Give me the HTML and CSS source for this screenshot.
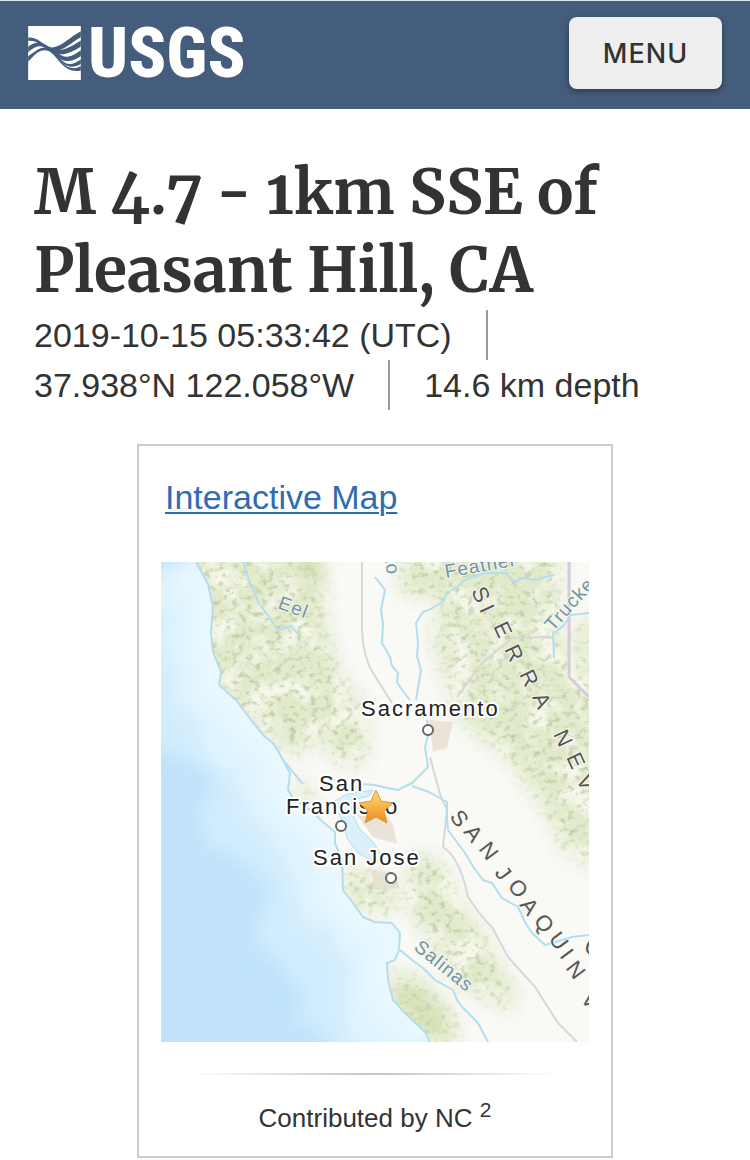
FILE: index.html
```html
<!DOCTYPE html>
<html lang="en">
<head>
<meta charset="utf-8">
<meta name="viewport" content="width=device-width, initial-scale=1">
<title>M 4.7 - 1km SSE of Pleasant Hill, CA</title>
<link rel="stylesheet" href="styles.css">
</head>
<body>
<header class="site-header">
  <a class="logo" href="#" aria-label="USGS home">
    <svg class="logo-mark" viewBox="6 5 159 163" aria-hidden="true">
      <path fill="#fff" d="M6 5H165V168H6z"/>
      <g class="logo-waves">
        <path d="M6 40C32 38 48 58 68 67C96 80 128 40 165 21V39C134 55 105 90 72 77C48 68 34 47 6 50z"/>
        <path d="M6 68C28 49 47 55 67 68C98 88 126 74 165 49V67C130 90 99 101 67 77C45 61 31 63 6 84z"/>
        <path d="M6 96C28 81 41 67 63 70C88 75 101 99 124 98C140 96 151 88 165 78V96C142 109 124 118 101 103C79 86 64 74 45 80C30 86 20 98 6 113z"/>
        <path d="M62 70C89 80 105 119 131 120C143 120 153 114 165 106V120C143 132 127 131 108 115C92 101 82 85 62 75z"/>
        <path d="M70 76C94 91 111 131 141 132C151 133 158 130 165 126V139C143 144 124 138 107 120C94 106 84 91 70 80z"/>
      </g>
    </svg>
    <span class="logo-name">USGS</span>
  </a>
  <button class="menu-button" type="button">MENU</button>
</header>

<main class="event">
  <h1 class="event-title">M 4.7 - 1km SSE of Pleasant Hill, CA</h1>
  <ul class="event-details">
    <li>2019-10-15 05:33:42 (UTC)</li>
    <li>37.938°N 122.058°W</li>
    <li>14.6 km depth</li>
  </ul>

  <section class="card">
    <h2 class="card-title"><a href="#">Interactive Map</a></h2>
    <svg class="map" viewBox="0 0 428 480" role="img" aria-label="Map of the epicenter east of San Francisco">
      <defs>
        <filter id="soft" x="-30%" y="-30%" width="160%" height="160%"><feGaussianBlur stdDeviation="9"/></filter>
        <filter id="shelf" x="-30%" y="-30%" width="160%" height="160%">
          <feTurbulence type="fractalNoise" baseFrequency="0.02" numOctaves="3" seed="4" result="n"/>
          <feDisplacementMap in="SourceGraphic" in2="n" scale="50" xChannelSelector="R" yChannelSelector="G"/>
          <feGaussianBlur stdDeviation="9"/>
        </filter>
        <filter id="hills" x="-5%" y="-5%" width="110%" height="110%" color-interpolation-filters="sRGB">
          <feGaussianBlur in="SourceGraphic" stdDeviation="8" result="area"/>
          <feTurbulence type="fractalNoise" baseFrequency="0.14 0.18" numOctaves="4" seed="9"/>
          <feColorMatrix values="0 0 0 0 0.66  0 0 0 0 0.70  0 0 0 0 0.52  4 0 0 0 -2.1" result="dots"/>
          <feComposite in="dots" in2="area" operator="in"/>
        </filter>
        <filter id="patches" x="-5%" y="-5%" width="110%" height="110%" color-interpolation-filters="sRGB">
          <feGaussianBlur in="SourceGraphic" stdDeviation="8" result="area"/>
          <feTurbulence type="fractalNoise" baseFrequency="0.035" numOctaves="4" seed="21"/>
          <feColorMatrix values="0 0 0 0 0.98  0 0 0 0 0.98  0 0 0 0 0.95  0 4 0 0 -1.8" result="gaps"/>
          <feComposite in="gaps" in2="area" operator="in"/>
        </filter>
        <linearGradient id="star" x1="0" y1="0" x2="0" y2="1">
          <stop offset="0" stop-color="#ffdc78"/><stop offset="1" stop-color="#f08a18"/>
        </linearGradient>
        <path id="coast" d="M35 0L47 22L52 45L50 70L52 90L60 110L58 123L75 138L90 158L103 174L113 182L122 198L129 211L127 228L132 236L149 248L162 260L174 270L174 281L181 298L182 328L192 341L202 355L214 360L231 361L239 371L238 388L234 398L226 401L227 418L232 438L244 451L264 470L269 480"/>
        <path id="land" d="M35 0L47 22L52 45L50 70L52 90L60 110L58 123L75 138L90 158L103 174L113 182L122 198L129 211L127 228L132 236L149 248L162 260L174 270L174 281L181 298L182 328L192 341L202 355L214 360L231 361L239 371L238 388L234 398L226 401L227 418L232 438L244 451L264 470L269 480H428V0z"/>
        <clipPath id="land-clip"><use href="#land"/></clipPath>
        <g id="green-areas">
          <path d="M30 -10H160L164 60L178 110L206 150L205 200L180 205L150 165L145 195L110 180L90 160L45 110z"/>
          <path d="M238 -10H400L396 70L440 150V310L405 290L378 240L350 200L300 160L285 120L270 70L285 40L240 30z"/>
          <path d="M128 215L160 238L150 246L130 232z"/>
          <path d="M182 305L222 312L240 350L200 352L183 330z"/>
          <path d="M255 290L280 300L292 330L320 370L355 430L350 450L300 425L262 370L240 330z"/>
          <path d="M228 405L262 420L290 450L300 480H268L232 440z"/>
          <path d="M414 60H440V170L410 160L425 130z"/>
        </g>
      </defs>

      <path fill="#c0e3fb" d="M0 0H428V480H0z"/>
      <g class="line">
        <use href="#coast" stroke="#d2edfd" stroke-width="170" filter="url(#shelf)"/>
        <use href="#coast" stroke="#e0f4fe" stroke-width="100" filter="url(#shelf)"/>
        <use href="#coast" stroke="#eaf8fe" stroke-width="40" filter="url(#soft)"/>
      </g>
      <use href="#land" fill="#f9f9f6"/>
      <g clip-path="url(#land-clip)">
        <use href="#green-areas" fill="#e1ebcb" filter="url(#soft)"/>
        <use href="#green-areas" filter="url(#patches)" opacity=".8"/>
        <use href="#green-areas" filter="url(#hills)" opacity=".5"/>
        <path fill="#cbd8a4" opacity=".6" filter="url(#soft)" d="M232 412L258 424L286 462L284 480L262 474L236 440zM120 -10H158L160 30L140 20z"/>
        <path fill="#e2dccb" d="M268 158L292 160L286 186L272 190zM210 308L236 312L238 326L214 328zM188 242L214 240L232 262L236 282L212 275z" opacity=".7"/>
      </g>
      <use href="#coast" class="line" stroke="#b4dcee" stroke-width="2"/>
      <path class="water" d="M172 240L186 232L200 230L212 228L208 234L192 238L190 248L198 266L212 280L222 296L212 300L196 290L186 276L182 260z"/>

      <g class="line road">
        <path d="M201 0V68Q202 95 212 111L231 141M269 195L279 232L286 248L282 285Q299 296 307 335Q320 355 331 365L347 395L374 425L397 461L416 480"/>
        <path d="M296 135L321 101L351 76L391 75"/>
      </g>
      <path class="line border" d="M408 0V115L428 135"/>
      <g class="line river">
        <path d="M82 0L88 18L97 40L108 55L117 68L130 64L138 73"/>
        <path d="M214 15L224 28L222 38L220 48L222 62L221 81L229 95L231 104L237 111L236 120L241 128L249 138"/>
        <path d="M394 13L384 15L374 18L362 16L354 20L344 11L324 11L304 18L296 25L287 30L281 40L270 47L262 50L255 61L257 81L256 94L260 108L255 138"/>
        <path d="M266 158L268 170L264 185L267 205L260 212L251 221L237 228L226 226L214 223L200 222L186 230M251 224L268 230L286 240V256L287 268L304 291L313 306L322 318L331 321L341 336L357 345L364 360L371 371L384 383L411 375L428 373"/>
        <path d="M239 388L251 398L262 406L274 418L292 428L296 438L301 445L317 461L327 480"/>
        <path d="M428 51L410 53L402 64L392 72L393 96M122 198L142 222"/>
      </g>

      <g class="river-name">
        <text transform="translate(116 46) rotate(20)">Eel</text>
        <text transform="translate(252 387) rotate(39)">Salinas</text>
        <text transform="translate(392 70) rotate(-48)">Trucke</text>
        <text transform="translate(285 16) rotate(-10)">Feather</text>
        <text transform="translate(224 -4) rotate(82)">to</text>
      </g>
      <g class="region-name">
        <text rotate="65" x="310 318 332 343 358 371 392 405 415" y="29 47 64 87 112 135 172 195 217">SIERRANEV</text>
        <text rotate="53" x="288 302 317" y="255 270 287">SAN</text>
        <text rotate="53" x="333 346 358 372 387 398 404" y="311 324 343 359 377 394 406">JOAQUIN</text>
        <text rotate="53" x="419" y="437">V</text>
        <text rotate="20" x="422" y="390">C</text>
      </g>
      <g class="city-mark">
        <circle cx="267" cy="168" r="5"/>
        <circle cx="180" cy="264" r="5"/>
        <circle cx="230" cy="316" r="5"/>
      </g>
      <g class="city-name">
        <text x="200" y="154">Sacramento</text>
        <text x="158" y="229">San</text>
        <text x="125" y="252">Francisco</text>
        <text x="152" y="303">San Jose</text>
      </g>
      <path fill="url(#star)" stroke="#d99a45" stroke-linejoin="round" d="M215 228L220 239L232 241L223 249L226 261L215 255L204 261L207 249L198 241L210 239z"/>
    </svg>
    <hr class="divider">
    <p class="credit">Contributed by NC <sup>2</sup></p>
  </section>
</main>
</body>
</html>
```
FILE: styles.css
```css
* {
  box-sizing: border-box;
}

body {
  margin: 0;
  background: #fff;
  color: #333;
  font-family: "Liberation Sans", Arial, sans-serif;
}

.site-header {
  display: flex;
  align-items: center;
  justify-content: space-between;
  padding: 16px 28px 20px;
  border-top: 1px solid #d9e6f0;
  background: #455d7c;
}

.logo {
  display: flex;
  align-items: center;
  gap: 7px;
  color: #fff;
  text-decoration: none;
}

.logo-mark {
  width: 53px;
  height: 54px;
}

.logo-waves {
  fill: #455d7c;
}

.logo-name {
  font-family: "Roboto Condensed", Roboto, "Liberation Sans", sans-serif;
  font-size: 70px;
  font-weight: 800;
  line-height: 54px;
}

.menu-button {
  width: 153px;
  height: 72px;
  border: 0;
  border-radius: 8px;
  background: #eee;
  box-shadow: 0 2px 6px rgba(0, 0, 0, 0.4);
  color: #333;
  font-family: Inter, "Liberation Sans", sans-serif;
  font-size: 27px;
  font-weight: 500;
  letter-spacing: 1px;
}

.event {
  padding: 45px 34px 0;
}

.event-title {
  margin: 0;
  font-family: Merriweather, "Liberation Serif", serif;
  font-size: 61px;
  font-kerning: none;
  font-variant-numeric: oldstyle-nums;
  font-weight: bold;
  line-height: 78px;
}

.event-details {
  display: flex;
  flex-wrap: wrap;
  margin: 0 0 34px;
  padding: 0;
  list-style: none;
  font-size: 34px;
  line-height: 50px;
}

.event-details li:not(:last-child) {
  margin-right: 34px;
  padding-right: 34px;
  border-right: 2px solid #999;
}

.card {
  max-width: 476px;
  margin: 0 auto;
  padding: 26px 22px 20px;
  border: 2px solid #ccc;
}

.card-title {
  margin: 0 4px 40px;
  font-size: 34px;
  font-weight: normal;
  line-height: 50px;
}

.card-title a {
  color: #2f6cb3;
  text-decoration-thickness: 2px;
  text-underline-offset: 3px;
}

.map {
  display: block;
  width: 100%;
  overflow: hidden;
}

.map text {
  font-family: "Liberation Sans", Arial, sans-serif;
}

.line {
  fill: none;
  stroke-linejoin: round;
}

.road {
  stroke: #d8d6d8;
  stroke-width: 2px;
}

.border {
  stroke: #d6cadb;
  stroke-width: 3px;
}

.river {
  stroke: #b3def0;
  stroke-width: 2px;
}

.water {
  fill: #d9f1fc;
  stroke: #b4dcee;
}

.river-name {
  fill: #6f93a8;
  stroke: #f4f6ea;
  stroke-width: 2px;
  paint-order: stroke;
  font-size: 19px;
  letter-spacing: 1px;
}

.region-name {
  fill: #555;
  stroke: #f8f8f0;
  stroke-width: 2px;
  paint-order: stroke;
  font-size: 22px;
}

.city-mark {
  fill: #fff;
  stroke: #666;
  stroke-width: 2px;
}

.city-name {
  fill: #222;
  stroke: #fff;
  stroke-width: 4px;
  stroke-linejoin: round;
  paint-order: stroke;
  font-size: 22px;
  letter-spacing: 2px;
}

.divider {
  height: 2px;
  margin: 31px 28px 25px;
  border: 0;
  background: linear-gradient(to right, transparent, #c4c4c4, transparent);
}

.credit {
  margin: 0;
  font-size: 26px;
  line-height: 36px;
  text-align: center;
}

.credit sup {
  font-size: 21px;
  line-height: 0;
}
```
